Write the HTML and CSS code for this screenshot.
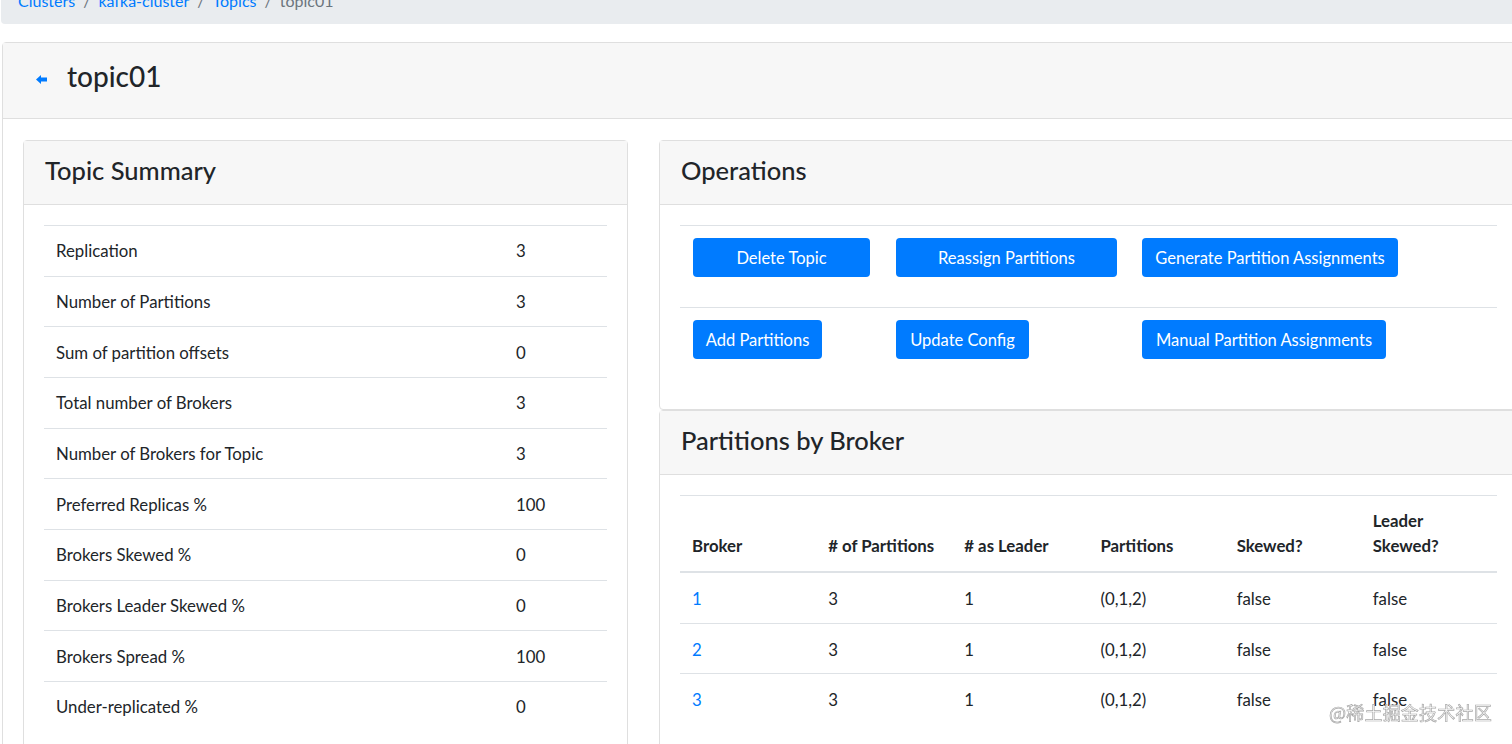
FILE: index.html
```html
<!DOCTYPE html>
<html lang="en">
<head>
<meta charset="utf-8">
<title>topic01</title>
<link rel="stylesheet" href="styles.css">
</head>
<body>
<div class="page">
  <nav class="crumbs">
    <a href="#">Clusters</a><span class="sep">/</span>
    <a href="#">kafka-cluster</a><span class="sep">/</span>
    <a href="#">Topics</a><span class="sep">/</span>
    <span class="active">topic01</span>
  </nav>

  <section class="card main">
    <header class="main-head">
      <a href="#" class="back" aria-label="back">
        <svg width="11" height="9" viewBox="0 0 11 9"><polygon points="0,4.5 5,0 5,2.6 11,2.6 11,6.4 5,6.4 5,9" fill="#007bff"/></svg>
      </a>
      <h2 class="main-title">topic01</h2>
    </header>

    <div class="main-body">
      <div class="card summary">
        <div class="card-header"><h3 class="card-title">Topic Summary</h3></div>
        <div class="card-body">
          <table class="table summary-table">
            <tbody>
              <tr><td>Replication</td><td>3</td></tr>
              <tr><td>Number of Partitions</td><td>3</td></tr>
              <tr><td>Sum of partition offsets</td><td>0</td></tr>
              <tr><td>Total number of Brokers</td><td>3</td></tr>
              <tr><td>Number of Brokers for Topic</td><td>3</td></tr>
              <tr><td>Preferred Replicas %</td><td>100</td></tr>
              <tr><td>Brokers Skewed %</td><td>0</td></tr>
              <tr><td>Brokers Leader Skewed %</td><td>0</td></tr>
              <tr><td>Brokers Spread %</td><td>100</td></tr>
              <tr><td>Under-replicated %</td><td>0</td></tr>
            </tbody>
          </table>
        </div>
      </div>

      <div class="right-col">
        <div class="card ops">
          <div class="card-header"><h3 class="card-title">Operations</h3></div>
          <div class="card-body">
            <table class="table ops-table">
              <tbody>
                <tr>
                  <td class="c1"><button class="btn w-delete">Delete Topic</button></td>
                  <td class="c2"><button class="btn w-reassign">Reassign Partitions</button></td>
                  <td><button class="btn w-generate">Generate Partition Assignments</button></td>
                </tr>
                <tr>
                  <td class="c1"><button class="btn w-add">Add Partitions</button></td>
                  <td class="c2"><button class="btn w-update">Update Config</button></td>
                  <td><button class="btn w-manual">Manual Partition Assignments</button></td>
                </tr>
              </tbody>
            </table>
          </div>
        </div>

        <div class="card pbb">
          <div class="card-header"><h3 class="card-title">Partitions by Broker</h3></div>
          <div class="card-body pbb-body">
            <table class="table broker-table">
              <thead>
                <tr>
                  <th>Broker</th>
                  <th># of Partitions</th>
                  <th># as Leader</th>
                  <th>Partitions</th>
                  <th>Skewed?</th>
                  <th>Leader Skewed?</th>
                </tr>
              </thead>
              <tbody>
                <tr><td><a href="#">1</a></td><td>3</td><td>1</td><td>(0,1,2)</td><td>false</td><td>false</td></tr>
                <tr><td><a href="#">2</a></td><td>3</td><td>1</td><td>(0,1,2)</td><td>false</td><td>false</td></tr>
                <tr><td><a href="#">3</a></td><td>3</td><td>1</td><td>(0,1,2)</td><td>false</td><td>false</td></tr>
              </tbody>
            </table>
          </div>
        </div>
      </div>
    </div>
  </section>
</div>
<div class="watermark">@稀土掘金技术社区</div>
</body>
</html>
```

FILE: styles.css
```css
html, body {
  margin: 0;
  padding: 0;
  overflow: hidden;
  background: #fff;
}
body {
  font-family: "Lato", "Liberation Sans", sans-serif;
  font-size: 16.8px;
  line-height: 25px;
  color: #212529;
}
a { color: #007bff; text-decoration: none; }

.page {
  width: 1540px;
  padding-left: 1px;
}

/* breadcrumb */
.crumbs {
  margin-top: -24px;
  margin-bottom: 18px;
  background: #e9ecef;
  border-radius: 4px;
  padding: 12px 17px 11px;
  font-size: 16px;
  line-height: 25px;
  display: flex;
  align-items: center;
}
.crumbs .sep {
  color: #6c757d;
  padding: 0 8px;
}
.crumbs .active { color: #6c757d; }

/* cards */
.card {
  background: #fff;
  border: 1px solid #dfdfdf;
  border-radius: 4px;
}
.card-header {
  background: #f7f7f7;
  border-bottom: 1px solid #dfdfdf;
  height: 63px;
  padding: 0 21px;
  display: flex;
  align-items: center;
  box-sizing: content-box;
}
.card-title {
  margin: -5px 0 0;
  font-size: 25.5px;
  font-weight: 500;
  line-height: 30px;
}
.card-body {
  padding: 20px;
}
.pbb-body {
  padding-bottom: 60px;
}

.main {
  margin-left: 1px;
}
.main-head {
  background: #f7f7f7;
  border-bottom: 1px solid #dfdfdf;
  height: 75px;
  display: flex;
  align-items: center;
  padding-left: 33px;
}
.back {
  display: flex;
  width: 31px;
  margin-top: -3px;
}
.main-title {
  margin: -10px 0 0;
  font-size: 28px;
  font-weight: 500;
  line-height: 34px;
}
.main-body {
  padding: 21px 20px 20px;
  display: grid;
  grid-template-columns: 605px 859px;
  column-gap: 31px;
  align-items: start;
}

/* tables */
.table {
  width: 100%;
  border-collapse: collapse;
}
.table td, .table th {
  border-top: 1px solid #dee2e6;
  text-align: left;
  vertical-align: top;
}

.summary-table td {
  padding: 12.33px 12px;
}
.summary-table td:first-child { width: 436px; }

.ops-table td {
  padding: 12px 12px 30px;
}
.ops-table .c1 { width: 179px; }
.ops-table .c2 { width: 222px; }
.ops-table td:first-child { padding-left: 13px; }

.btn {
  font-family: inherit;
  font-size: 16.5px;
  line-height: 25px;
  padding: 8px 12px 6px;
  border: 0;
  border-radius: 4px;
  background: #007bff;
  color: #fff;
  text-align: center;
  cursor: pointer;
  display: inline-block;
}
.w-delete { width: 177px; }
.w-reassign { width: 221px; }
.w-generate { width: 256px; }
.w-add { width: 129px; }
.w-update { width: 133px; }
.w-manual { width: 244px; }

.broker-table {
  table-layout: fixed;
}
.broker-table th {
  font-weight: 700;
  vertical-align: bottom;
  padding: 12px 12px 13px;
  border-bottom: 2px solid #dee2e6;
}
.broker-table td {
  padding: 13px 12px 11.67px;
}

.watermark {
  position: fixed;
  left: 1329px;
  top: 699px;
  font-family: "Noto Sans CJK SC", sans-serif;
  font-size: 18px;
  line-height: 26px;
  color: rgba(255, 255, 255, 0.85);
  -webkit-text-stroke: 0.7px #a8a8a8;
  letter-spacing: 0.2px;
}
```
